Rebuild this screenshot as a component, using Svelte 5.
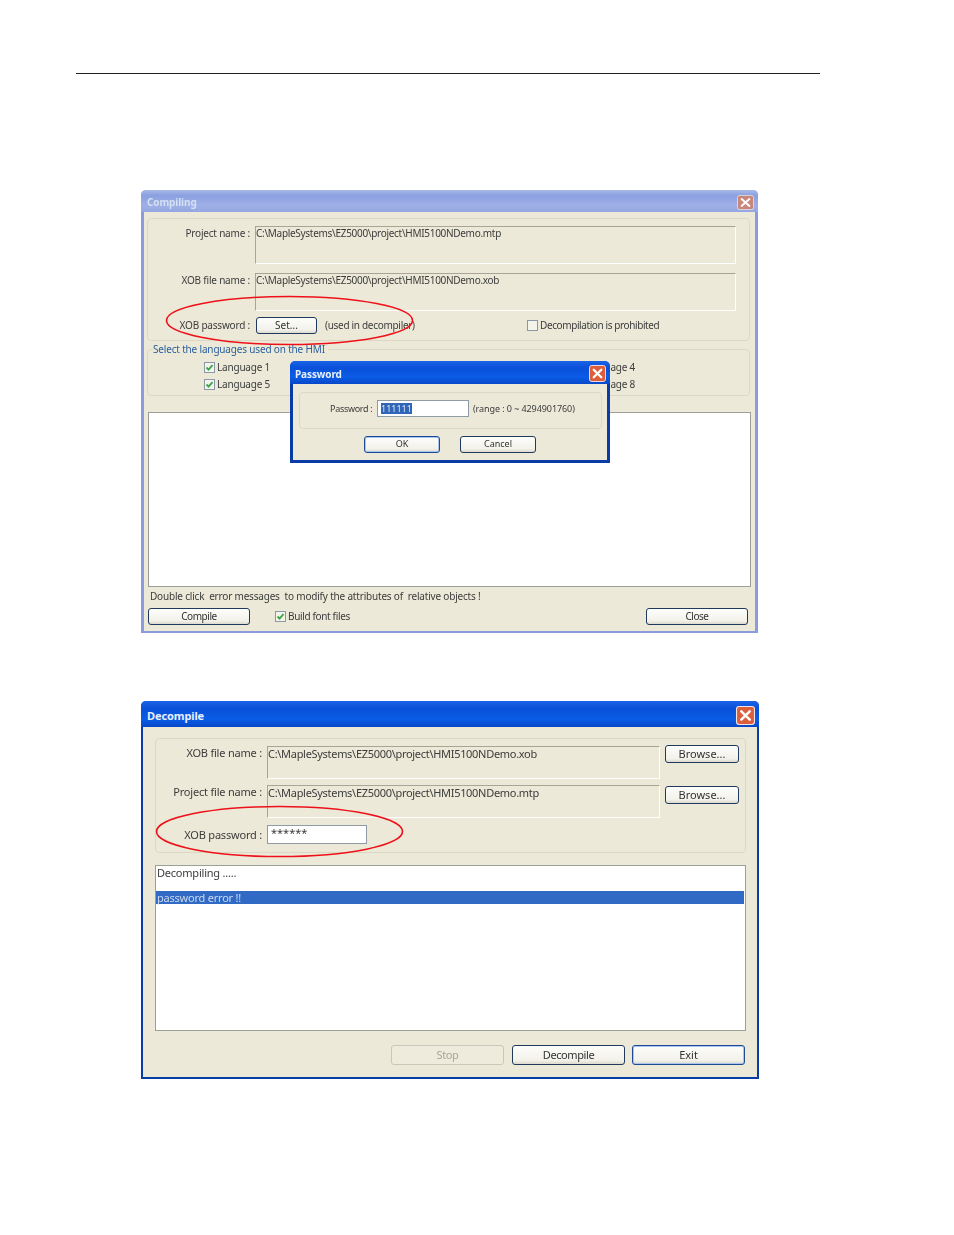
<script>
  const compileFields = [
    { label: 'Project name :', path: 'C:\\MapleSystems\\EZ5000\\project\\HMI5100NDemo.mtp' },
    { label: 'XOB file name :', path: 'C:\\MapleSystems\\EZ5000\\project\\HMI5100NDemo.xob' }
  ]
  const decompileFields = [
    { label: 'XOB file name :', path: 'C:\\MapleSystems\\EZ5000\\project\\HMI5100NDemo.xob' },
    { label: 'Project file name :', path: 'C:\\MapleSystems\\EZ5000\\project\\HMI5100NDemo.mtp' }
  ]
  const languages = [1, 2, 3, 4, 5, 6, 7, 8]
</script>

{#snippet closeBox()}
  <svg class="close" viewBox="0 0 18 18" preserveAspectRatio="none" aria-hidden="true">
    <rect x="0.5" y="0.5" width="17" height="17" rx="2.5" class="close-bg" />
    <path d="M5 5 L13 13 M13 5 L5 13" stroke="#fff" stroke-width="2.4" stroke-linecap="round" />
  </svg>
{/snippet}

{#snippet check(on)}
  <svg class="check" viewBox="0 0 11 11" width="11" height="11" aria-hidden="true">
    <rect x="0.5" y="0.5" width="10" height="10" fill="#f4f4ea" stroke="#8b98a6" />
    {#if on}
      <path d="M2.5 5.5 L4.6 7.6 L8.5 3.2" fill="none" stroke="#3aa648" stroke-width="1.8" />
    {/if}
  </svg>
{/snippet}

<div class="page">
  <hr class="rule" />

  <section class="window compiling">
    <header class="title inactive">
      <span>Compiling</span>
      {@render closeBox()}
    </header>
    <div class="client">
      <div class="group top-group">
        {#each compileFields as f}
          <div class="row">
            <span class="label">{f.label}</span>
            <div class="field">{f.path}</div>
          </div>
        {/each}
        <div class="row pw-row">
          <span class="label">XOB password :</span>
          <div class="pw-line">
            <button class="btn set">Set...</button>
            <span class="hint">(used in decompiler)</span>
            <span class="prohibit">{@render check(false)}Decompilation is prohibited</span>
          </div>
        </div>
      </div>

      <div class="group lang-group">
        <span class="legend">Select the languages used on the HMI</span>
        <div class="langs">
          {#each languages as n}
            <span class="lang">{@render check(true)}Language {n}</span>
          {/each}
        </div>
      </div>

      <div class="log compile-log"></div>

      <p class="note">Double click&nbsp; error messages&nbsp; to modify the attributes of&nbsp; relative objects !</p>
      <div class="footer">
        <button class="btn wide">Compile</button>
        <span class="build">{@render check(true)}Build font files</span>
        <button class="btn wide end">Close</button>
      </div>
    </div>

    <div class="window password">
      <header class="title active small">
        <span>Password</span>
        {@render closeBox()}
      </header>
      <div class="client">
        <div class="group pass-group">
          <span class="pass-label">Password :</span>
          <div class="input pass-input"><span class="selected">111111</span></div>
          <span class="range">(range : 0 ~ 4294901760)</span>
        </div>
        <div class="pass-buttons">
          <button class="btn focus pass-btn">OK</button>
          <button class="btn pass-btn">Cancel</button>
        </div>
      </div>
    </div>

    <svg class="ring ring-a" viewBox="0 0 249 51" aria-hidden="true">
      <ellipse cx="124.5" cy="25.5" rx="123" ry="24" fill="none" stroke="#ee1119" stroke-width="1.6" />
    </svg>
  </section>

  <section class="window decompile">
    <header class="title active big">
      <span>Decompile</span>
      {@render closeBox()}
    </header>
    <div class="client">
      <div class="group dec-group">
        {#each decompileFields as f}
          <div class="dec-row">
            <span class="label">{f.label}</span>
            <div class="field dec-field">{f.path}</div>
            <button class="btn browse">Browse...</button>
          </div>
        {/each}
        <div class="dec-row dec-pw">
          <span class="label">XOB password :</span>
          <div class="input dec-input">******</div>
        </div>
      </div>

      <div class="log dec-log">
        <div class="line">Decompiling .....</div>
        <div class="line blank"></div>
        <div class="line picked">password error !!</div>
      </div>

      <div class="dec-buttons">
        <button class="btn big-btn off">Stop</button>
        <button class="btn big-btn">Decompile</button>
        <button class="btn big-btn focus exit">Exit</button>
      </div>
    </div>

    <svg class="ring ring-b" viewBox="0 0 249 53" aria-hidden="true">
      <ellipse cx="124.5" cy="26.5" rx="123" ry="25" fill="none" stroke="#ee1119" stroke-width="1.6" />
    </svg>
  </section>
</div>

<style>
  :global(body) {
    margin: 0;
    background: #fff;
  }
  .page {
    height: 1235px;
    overflow: hidden;
    padding-top: 73px;
    box-sizing: border-box;
    font-family: "Noto Sans", "DejaVu Sans", sans-serif;
    font-size: 10px;
    color: #3c3c3c;
  }
  .rule {
    margin: 0 0 0 76px;
    width: 744px;
    height: 1px;
    border: 0;
    background: #222;
  }
  .window {
    position: relative;
    box-sizing: border-box;
    background: #ece9d8;
    display: flex;
    flex-direction: column;
  }
  section.window {
    filter: blur(0.3px);
  }
  .compiling {
    width: 617px;
    height: 443px;
    margin: 116px 0 0 141px;
    border: solid #8c9bdb;
    border-width: 0 3px 2px;
    border-radius: 5px 5px 0 0;
  }
  .decompile {
    width: 618px;
    height: 378px;
    margin: 68px 0 0 141px;
    border: solid #0a3ca8;
    border-width: 0 2px 2px;
    border-radius: 5px 5px 0 0;
  }
  .title {
    display: flex;
    align-items: center;
    justify-content: space-between;
    height: 22px;
    padding: 0 4px 0 6px;
    margin: 0 -3px;
    border-radius: 5px 5px 0 0;
    font-weight: 700;
    font-size: 10px;
    flex: none;
  }
  .title span {
    padding-top: 2px;
    letter-spacing: -0.1px;
  }
  .close {
    display: block;
    flex: none;
    width: 17px;
    height: 15px;
    margin-top: 3px;
  }
  .title.inactive {
    background: linear-gradient(#a8b8e8, #8aa0e0 25%, #9fb0e6 70%, #93a7e2);
    color: #d5e0f3;
  }
  .title.inactive .close-bg {
    fill: #c9867a;
    stroke: #e6dde0;
  }
  .title.active {
    background: linear-gradient(#1a63e6, #0a50d8 30%, #0a5ce6 70%, #0747c8);
    color: #e8f0ff;
  }
  .title.active .close-bg {
    fill: #dd5e3c;
    stroke: #f2e6e0;
  }
  .title.big {
    height: 26px;
    margin: 0 -2px;
    padding: 0 4px 0 6px;
    font-size: 11px;
  }
  .title.big .close {
    width: 19px;
    height: 19px;
  }
  .title.small {
    height: 23px;
    margin: 0 -3px;
    padding: 0 4px 0 5px;
  }
  .title.small .close {
    height: 17px;
    margin-top: 2px;
  }
  .client {
    flex: 1;
    display: flex;
    flex-direction: column;
  }
  .group {
    box-sizing: border-box;
    border: 1px solid #dcd8c6;
    border-radius: 4px;
  }
  .top-group {
    height: 123px;
    margin: 6px 5px 0 3px;
    padding-top: 7px;
    display: flex;
    flex-direction: column;
    gap: 9px;
  }
  .row {
    display: grid;
    grid-template-columns: 107px 481px;
  }
  .label {
    text-align: right;
    padding-right: 5px;
    line-height: 14px;
    letter-spacing: -0.2px;
  }
  .field {
    box-sizing: border-box;
    height: 38px;
    line-height: 12px;
    letter-spacing: -0.3px;
    border: 1px solid;
    border-color: #a8a596 #fff #fff #a8a596;
  }
  .pw-row {
    margin-top: -3px;
    align-items: center;
    height: 17px;
  }
  .pw-row .label {
    padding-bottom: 2px;
  }
  .pw-line {
    display: flex;
    align-items: center;
    margin-left: 1px;
  }
  .hint {
    margin-left: 8px;
    width: 202px;
    padding-bottom: 2px;
    letter-spacing: -0.3px;
  }
  .prohibit, .build, .lang {
    display: inline-flex;
    align-items: center;
    gap: 2px;
    white-space: nowrap;
    line-height: 11px;
  }
  .prohibit {
    letter-spacing: -0.4px;
  }
  .build {
    letter-spacing: -0.35px;
  }
  .lang {
    letter-spacing: -0.2px;
  }
  .check {
    flex: none;
  }
  .btn {
    box-sizing: border-box;
    padding: 0 0 2px;
    font: inherit;
    color: #333;
    background: linear-gradient(#fdfdfb, #f2f1ea 80%, #dcd9cc);
    border: 1px solid #1f3a5c;
    border-radius: 3px;
  }
  .btn.focus {
    border-color: #1c4a94;
    box-shadow: inset 0 0 0 1px #a9c4ee;
  }
  .set {
    width: 61px;
    height: 17px;
  }
  .lang-group {
    position: relative;
    height: 47px;
    margin: 8px 5px 0 3px;
    padding: 12px 0 0 56px;
  }
  .legend {
    position: absolute;
    top: -7px;
    left: 5px;
    line-height: 12px;
    padding-right: 3px;
    letter-spacing: -0.17px;
    background: #ece9d8;
    color: #2b5f9e;
  }
  .langs {
    display: grid;
    grid-template-columns: repeat(4, 121.7px);
    row-gap: 6px;
  }
  .lang {
    height: 11px;
  }
  .log {
    box-sizing: border-box;
    background: #fff;
    border: 1px solid #9c9e98;
  }
  .compile-log {
    height: 175px;
    margin: 16px 4px 0 4px;
  }
  .note {
    margin: 2px 0 0 6px;
    line-height: 14px;
    letter-spacing: -0.19px;
  }
  .footer {
    display: flex;
    align-items: center;
    margin: 5px 7px 0 4px;
  }
  .wide {
    width: 102px;
    height: 17px;
    letter-spacing: -0.45px;
  }
  .build {
    margin-left: 25px;
  }
  .end {
    margin-left: auto;
  }
  .password {
    position: absolute;
    left: 146px;
    top: 171px;
    width: 320px;
    height: 102px;
    border: solid #0a3ca8;
    border-width: 0 3px 3px;
    border-radius: 6px 6px 0 0;
  }
  .pass-group {
    display: flex;
    align-items: center;
    height: 37px;
    margin: 8px 5px 0 6px;
    padding: 0 0 4px 30px;
    font-size: 9px;
  }
  .pass-label {
    width: 42px;
    white-space: nowrap;
    letter-spacing: -0.3px;
  }
  .input {
    box-sizing: border-box;
    background: #fff;
    border: 1px solid #8f9ca8;
  }
  .pass-input {
    width: 92px;
    height: 17px;
    margin-left: 5px;
    padding: 2px 0 0 3px;
    line-height: 11px;
  }
  .selected {
    display: inline-block;
    background: #3165b8;
    color: #dfe8f5;
    line-height: 11px;
  }
  .range {
    margin-left: 4px;
    white-space: nowrap;
    letter-spacing: -0.08px;
  }
  .pass-buttons {
    display: flex;
    justify-content: center;
    gap: 20px;
    margin-top: 7px;
  }
  .pass-btn {
    width: 76px;
    height: 17px;
    font-size: 9px;
  }
  .dec-group {
    height: 115px;
    margin: 11px 11px 0 12px;
    padding-top: 7px;
    font-size: 11px;
    position: relative;
  }
  .dec-row {
    display: grid;
    grid-template-columns: 111px 393px 74px;
    column-gap: 0;
    height: 39px;
  }
  .dec-row .label {
    padding-right: 5px;
    white-space: nowrap;
  }
  .dec-field {
    height: 33px;
    line-height: 13px;
  }
  .browse {
    width: 74px;
    height: 18px;
    margin: -1px 0 0 5px;
  }
  .dec-row:nth-child(2) .browse {
    margin-top: 1px;
  }
  .dec-pw {
    height: 19px;
    margin-top: 1px;
    align-items: center;
  }
  .dec-input {
    width: 100px;
    height: 19px;
    padding-left: 3px;
    line-height: 13px;
  }
  .dec-log {
    height: 166px;
    margin: 12px 11px 0 12px;
    font-size: 11px;
    letter-spacing: -0.22px;
  }
  .line {
    height: 13px;
    padding-left: 1px;
    line-height: 13px;
    white-space: nowrap;
  }
  .blank {
    height: 12px;
  }
  .picked {
    margin-right: 1px;
    background: #316ac5;
    color: #cbd9ef;
  }
  .dec-buttons {
    display: flex;
    justify-content: flex-end;
    gap: 8px;
    margin: 14px 12px 0 0;
    font-size: 11px;
  }
  .big-btn {
    width: 113px;
    height: 20px;
    letter-spacing: -0.4px;
  }
  .big-btn.off {
    background: #eeebdd;
    border-color: #c9c7ba;
    color: #a8a69a;
  }
  .exit {
    margin-left: -1px;
    letter-spacing: 0;
  }
  .ring {
    position: absolute;
    overflow: visible;
    pointer-events: none;
  }
  .ring-a {
    left: 21px;
    top: 105px;
    width: 249px;
    height: 51px;
  }
  .ring-b {
    left: 12px;
    top: 104px;
    width: 249px;
    height: 53px;
  }
</style>
